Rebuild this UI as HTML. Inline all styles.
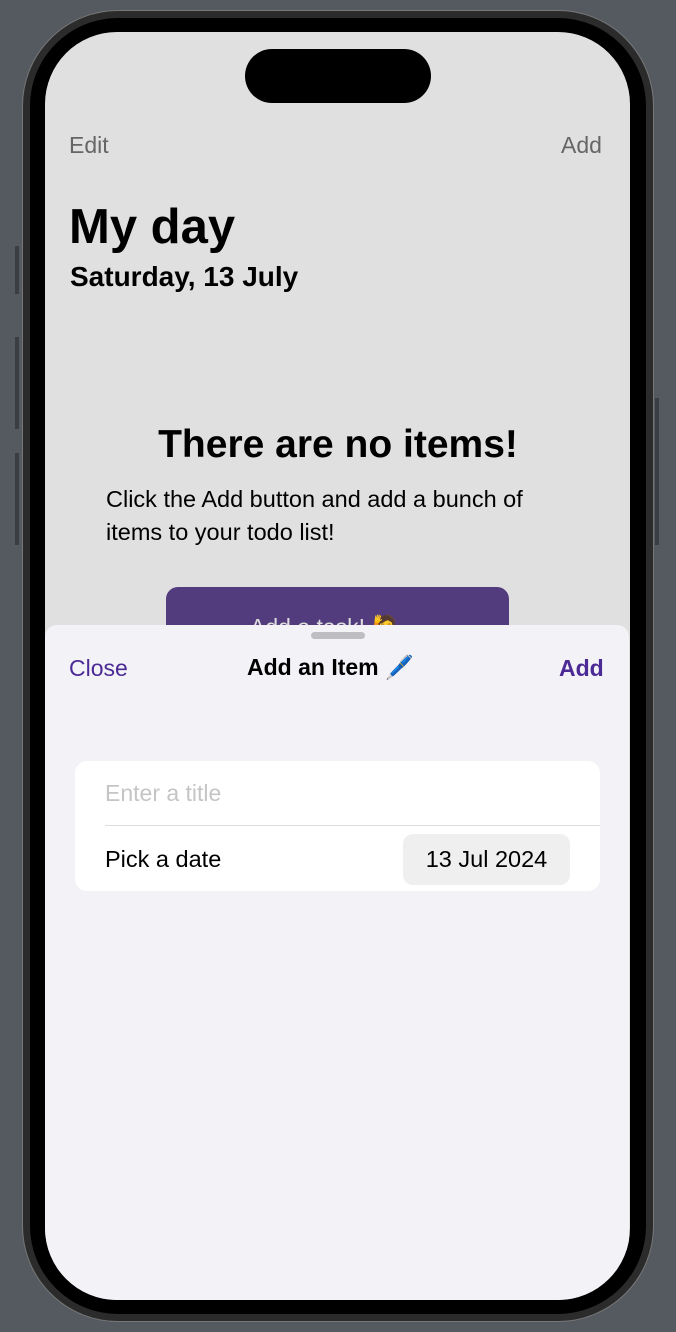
<!DOCTYPE html>
<html><head><meta charset="utf-8"><style>
*{margin:0;padding:0;box-sizing:border-box}
body{width:676px;height:1332px;background:#555a61;position:relative;overflow:hidden;font-family:"Liberation Sans",sans-serif}
.abs{position:absolute}
.frame{left:22px;top:10px;width:632px;height:1312px;border-radius:96px;background:#2b2b2b;border:1px solid #777}
.bez{left:30px;top:18px;width:616px;height:1296px;border-radius:88px;background:#000}
.screen{left:45px;top:32px;width:585px;height:1268px;border-radius:72px;background:#e0e0e0;overflow:hidden}
.island{left:245px;top:49px;width:186px;height:54px;border-radius:27px;background:#000}
.t{position:absolute;white-space:nowrap}
.btn{left:121px;top:555px;width:343px;height:60px;border-radius:12px;background:#523c7e}
.sheet{left:0;top:593px;width:584px;height:680px;background:#f2f2f7;border-radius:12px 12px 0 0}
.card{left:75px;top:761px;width:525px;height:130px;background:#fff;border-radius:12px}
.side{background:#3a3d42;width:4px}
</style></head><body>
<div class="abs side" style="left:15px;top:246px;height:48px"></div>
<div class="abs side" style="left:15px;top:337px;height:92px"></div>
<div class="abs side" style="left:15px;top:453px;height:92px"></div>
<div class="abs side" style="left:655px;top:398px;height:147px"></div>
<div class="abs frame"></div>
<div class="abs bez"></div>
<div class="abs screen">
<div class="abs btn"></div>
<div class="t" style="left:205px;top:582px;font-size:23px;color:#ddd">Add a task! 🙋</div>
<div class="abs sheet"></div>
</div>
<div class="abs island"></div>
<div class="t" style="left:69px;top:132px;font-size:23px;color:#666">Edit</div>
<div class="t" style="left:561px;top:132px;font-size:23px;color:#666">Add</div>
<div class="t" style="left:69px;top:199px;font-size:49px;font-weight:bold;color:#000">My day</div>
<div class="t" style="left:70px;top:261px;font-size:28px;font-weight:bold;color:#000">Saturday, 13 July</div>
<div class="t" style="left:0;width:676px;text-align:center;top:423px;font-size:39px;font-weight:bold;color:#000">There are no items!</div>
<div class="t" style="left:106px;top:483px;font-size:23.5px;line-height:33px;color:#000;white-space:normal;width:465px">Click the Add button and add a bunch of items to your todo list!</div>
<div class="abs" style="left:311px;top:632px;width:54px;height:7px;border-radius:4px;background:#bdbdc2"></div>
<div class="t" style="left:69px;top:655px;font-size:23px;color:#4b2a95">Close</div>
<div class="t" style="left:247px;top:654px;font-size:23px;font-weight:bold;color:#000">Add an Item 🖊️</div>
<div class="t" style="left:559px;top:655px;font-size:23px;font-weight:bold;color:#4b2a95">Add</div>
<div class="abs card"></div>
<div class="t" style="left:105px;top:780px;font-size:23px;color:#c5c5c7">Enter a title</div>
<div class="abs" style="left:105px;top:825px;width:495px;height:1px;background:#ddd"></div>
<div class="t" style="left:105px;top:846px;font-size:23.5px;color:#000">Pick a date</div>
<div class="abs" style="left:403px;top:834px;width:167px;height:51px;border-radius:10px;background:#efeff0"></div>
<div class="t" style="left:403px;width:167px;text-align:center;top:846px;font-size:23.5px;color:#000">13 Jul 2024</div>
</body></html>
